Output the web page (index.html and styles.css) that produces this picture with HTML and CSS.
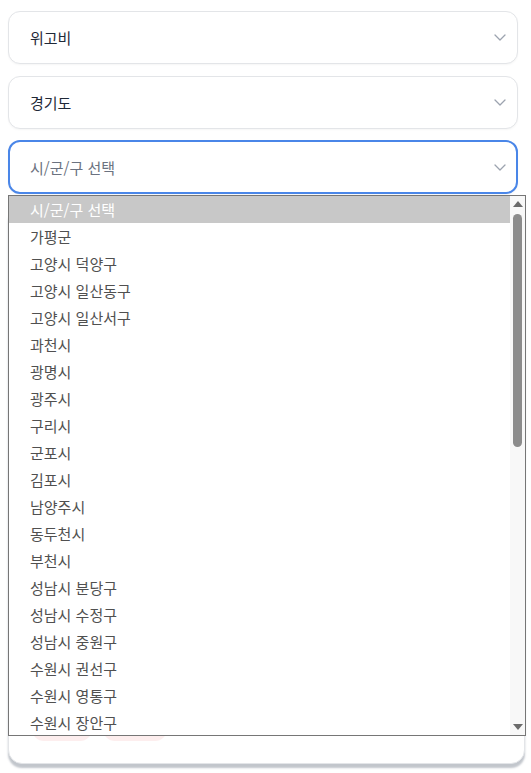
FILE: index.html
```html
<!DOCTYPE html>
<html lang="ko">
<head>
    <meta charset="UTF-8">
    <meta name="viewport" content="width=device-width, initial-scale=1.0">
    <title>지역 선택</title>
    <link rel="stylesheet" href="styles.css">
</head>
<body>
    <div class="page">
        <div class="select-box">
            <span class="select-value">위고비</span>
            <svg class="chevron" viewBox="0 0 12 7" width="12" height="7"><path d="M1 1l5 5 5-5" fill="none" stroke="#9ca3af" stroke-width="1.3" stroke-linecap="round" stroke-linejoin="round"/></svg>
        </div>

        <div class="select-box">
            <span class="select-value">경기도</span>
            <svg class="chevron" viewBox="0 0 12 7" width="12" height="7"><path d="M1 1l5 5 5-5" fill="none" stroke="#9ca3af" stroke-width="1.3" stroke-linecap="round" stroke-linejoin="round"/></svg>
        </div>

        <div class="select-box focused">
            <span class="select-value placeholder">시/군/구 선택</span>
            <svg class="chevron" viewBox="0 0 12 7" width="12" height="7"><path d="M1 1l5 5 5-5" fill="none" stroke="#9ca3af" stroke-width="1.3" stroke-linecap="round" stroke-linejoin="round"/></svg>
        </div>

        <div class="result-card">
            <div class="tags">
                <span class="tag"></span>
                <span class="tag wide"></span>
            </div>
        </div>

        <!-- open dropdown of the 시/군/구 select -->
        <div class="dropdown">
            <ul class="options">
                <li class="option selected">시/군/구 선택</li>
                <li class="option">가평군</li>
                <li class="option">고양시 덕양구</li>
                <li class="option">고양시 일산동구</li>
                <li class="option">고양시 일산서구</li>
                <li class="option">과천시</li>
                <li class="option">광명시</li>
                <li class="option">광주시</li>
                <li class="option">구리시</li>
                <li class="option">군포시</li>
                <li class="option">김포시</li>
                <li class="option">남양주시</li>
                <li class="option">동두천시</li>
                <li class="option">부천시</li>
                <li class="option">성남시 분당구</li>
                <li class="option">성남시 수정구</li>
                <li class="option">성남시 중원구</li>
                <li class="option">수원시 권선구</li>
                <li class="option">수원시 영통구</li>
                <li class="option">수원시 장안구</li>
            </ul>
            <div class="scrollbar">
                <span class="arrow up"></span>
                <div class="track">
                    <div class="thumb"></div>
                </div>
                <span class="arrow down"></span>
            </div>
        </div>
    </div>
</body>
</html>
```

FILE: styles.css
```css
* {
    margin: 0;
    padding: 0;
    box-sizing: border-box;
}

body {
    font-family: 'Noto Sans CJK KR', 'Noto Sans', sans-serif;
    background: white;
    color: #1f2937;
    width: 531px;
    height: 773px;
    overflow: hidden;
}

.page {
    position: relative;
    padding: 11px 6px 0 8px;
    display: flex;
    flex-direction: column;
    gap: 12px;
}

.select-box {
    width: 510px;
    height: 53px;
    border: 1px solid #e3e5e8;
    border-radius: 12px;
    background: white;
    box-shadow: 0 1px 2px rgba(0, 0, 0, 0.04);
    display: flex;
    align-items: center;
    justify-content: space-between;
    padding: 0 11px 0 21px;
}

.select-box.focused {
    height: 54px;
    margin-top: -1px;
    border: 2px solid #4a86e8;
    padding: 0 10px 0 20px;
}

.select-value {
    font-size: 15px;
    color: #1f2937;
}

.select-value.placeholder {
    color: #6b7280;
}

.chevron {
    display: block;
}

.result-card {
    height: 559px;
    margin-top: -1px;
    border: 1px solid #e3e5e8;
    border-radius: 14px;
    background: white;
    box-shadow: 0 4px 2px rgba(120, 128, 142, 0.45);
    padding: 509px 0 0 23px;
}

.tags {
    display: flex;
    gap: 11px;
}

.tag {
    display: block;
    width: 60px;
    height: 26px;
    border-radius: 12px;
    background: #fdeeee;
}

.tag.wide {
    width: 64px;
}

.dropdown {
    position: absolute;
    left: 8px;
    top: 195px;
    width: 518px;
    height: 541px;
    border: 1px solid #767676;
    background: white;
    display: flex;
    overflow: hidden;
}

.options {
    list-style: none;
    flex: 1;
    overflow: hidden;
}

.option {
    height: 27px;
    line-height: 27px;
    padding-left: 21px;
    font-size: 15px;
    color: #505050;
    white-space: nowrap;
}

.option.selected {
    background: #c8c8c8;
    color: white;
}

.scrollbar {
    width: 15px;
    background: #f8f8f8;
    display: flex;
    flex-direction: column;
    align-items: center;
}

.arrow {
    display: block;
    width: 0;
    height: 0;
    border-left: 5px solid transparent;
    border-right: 5px solid transparent;
    margin: 5px 0;
}

.arrow.up {
    border-bottom: 6px solid #6b6b6b;
}

.arrow.down {
    border-top: 6px solid #6b6b6b;
}

.track {
    flex: 1;
    width: 100%;
    display: flex;
    justify-content: center;
    padding-top: 2px;
}

.thumb {
    width: 9px;
    height: 233px;
    border-radius: 5px;
    background: #8c8c8c;
}
```
